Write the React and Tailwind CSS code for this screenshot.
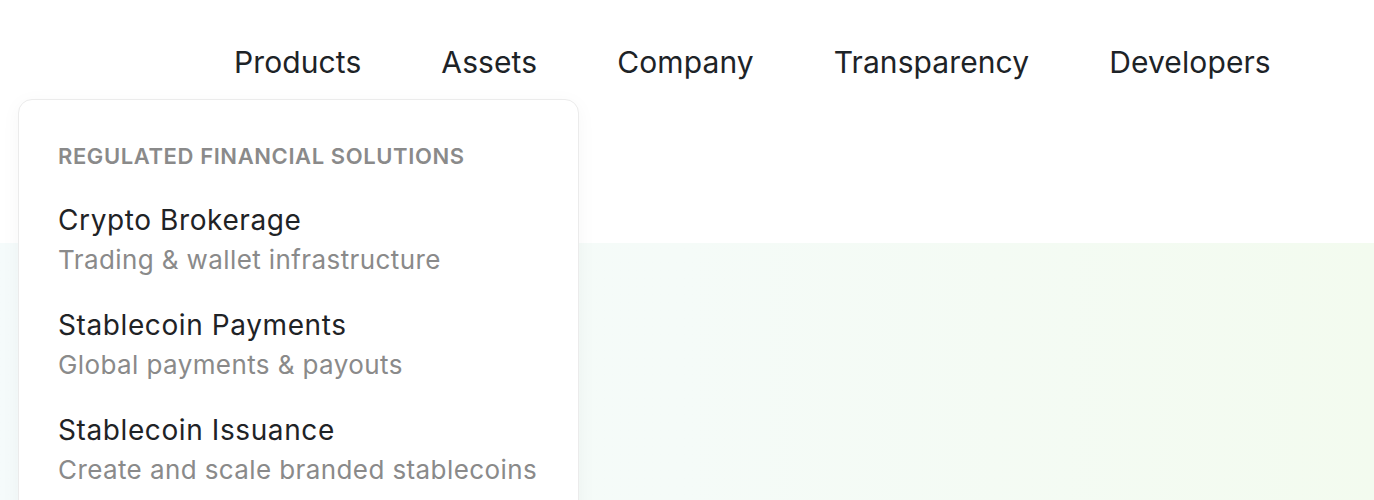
import React from 'react';

const navItems = ['Products', 'Assets', 'Company', 'Transparency', 'Developers'];

const products = [
  { title: 'Crypto Brokerage', desc: 'Trading & wallet infrastructure' },
  { title: 'Stablecoin Payments', desc: 'Global payments & payouts' },
  { title: 'Stablecoin Issuance', desc: 'Create and scale branded stablecoins' },
];

const App = () => {
  return (
    <div
      className="relative h-[500px] w-full overflow-hidden bg-white flex flex-col"
      style={{ fontFamily: 'Inter, "Noto Sans", sans-serif' }}
    >
      {/* Top navigation */}
      <header className="h-[243px] shrink-0 bg-white">
        <nav className="flex items-start gap-[80px] pl-[234px] pt-[44px]">
          {navItems.map((item) => (
            <a
              key={item}
              href="#"
              className="text-[30px] leading-[36px] tracking-[0.1px] text-[#1d2327]"
            >
              {item}
            </a>
          ))}
        </nav>
      </header>

      {/* Hero backdrop */}
      <section className="flex-1 bg-gradient-to-r from-[#f5fbfb] via-[#f5fbf8] to-[#f3fbef]" />

      {/* Products dropdown */}
      <div className="absolute left-[18px] top-[99px] w-[561px] h-[460px] rounded-[14px] border border-[#ebebeb] bg-white shadow-[0_4px_20px_rgba(0,0,0,0.04)] pl-[39px] pt-[42px]">
        <p className="text-[22px] leading-[28px] font-semibold uppercase tracking-[0.6px] text-[#8a8a8a]">
          Regulated Financial Solutions
        </p>
        <ul className="mt-[32px] flex flex-col gap-[30px]">
          {products.map((p) => (
            <li key={p.title}>
              <a href="#" className="block">
                <div className="text-[28px] leading-[36px] tracking-[0.6px] text-[#1f2326]">
                  {p.title}
                </div>
                <div className="mt-[5px] text-[26px] leading-[34px] tracking-[0.4px] text-[#8a8a8a]">
                  {p.desc}
                </div>
              </a>
            </li>
          ))}
        </ul>
      </div>
    </div>
  );
};

export default App;
